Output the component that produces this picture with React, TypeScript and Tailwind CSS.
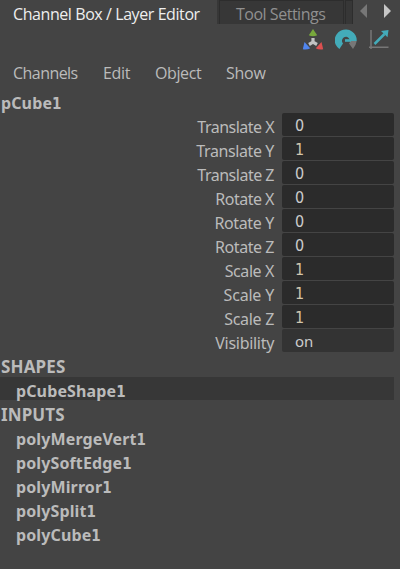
const channels = [
  { name: 'Translate X', value: '0', spacing: 'tracking-[-0.52px]' },
  { name: 'Translate Y', value: '1', spacing: 'tracking-[-0.4px]' },
  { name: 'Translate Z', value: '0', spacing: 'tracking-[-0.5px]' },
  { name: 'Rotate X', value: '0', spacing: 'tracking-[-0.5px]' },
  { name: 'Rotate Y', value: '0', spacing: 'tracking-[-0.35px]' },
  { name: 'Rotate Z', value: '0', spacing: 'tracking-[-0.45px]' },
  { name: 'Scale X', value: '1', spacing: 'tracking-[-0.4px]' },
  { name: 'Scale Y', value: '1', spacing: 'tracking-[-0.2px]' },
  { name: 'Scale Z', value: '1', spacing: 'tracking-[-0.3px]' },
  { name: 'Visibility', value: 'on', spacing: 'tracking-[-0.3px]' },
];

const inputs = ['polyMergeVert', 'polySoftEdge', 'polyMirror', 'polySplit', 'polyCube'];

function NodeName({ base }: { base: string }) {
  return (
    <span className="tracking-[0.12px] whitespace-nowrap">
      {base}
      <span className="font-['DejaVu_Sans_Condensed','DejaVu_Sans',sans-serif] text-[15px]">1</span>
    </span>
  );
}

function valueStyle(value: string) {
  if (value === 'on') return "bg-[#333333] font-['Noto_Sans',sans-serif] text-[15px] leading-6 text-[#cccccc]";
  if (value === '1') return "bg-[#2b2b2b] font-['DejaVu_Sans_Condensed','DejaVu_Sans',sans-serif] text-[16px] leading-[26px] text-[#d2c6ac]";
  return "bg-[#2b2b2b] font-['DejaVu_Sans_Condensed','DejaVu_Sans',sans-serif] text-[16px] leading-[26px] text-[#cccccc]";
}

function ManipulatorIcon() {
  return (
    <svg width="22" height="22" viewBox="0 0 22 22">
      <path d="M11 9v5M11 13.200l-4 2.300M11 13.200l4 2.300" stroke="#c2c2c2" strokeWidth="3.200" fill="none" />
      <path d="M11 0L15.200 6.300Q11 8.200 6.800 6.300Z" fill="#78a83c" />
      <path d="M2.500 13L8.200 19.200Q5.500 21 0.800 20.300Z" fill="#5085ee" />
      <path d="M19.500 13L13.800 19.200Q16.500 21 21.200 20.300Z" fill="#dc5050" />
    </svg>
  );
}

function SpeedIcon() {
  return (
    <svg width="22" height="22" viewBox="0 0 22 22">
      <path d="M8 14.500L4.400 20A11 10.700 0 1 1 21.700 12H15A4 4 0 1 0 8 14.500Z" fill="#43abb9" />
      <path d="M15 12H21.700Q21 16.500 18 20L14 14.500Q15 13.500 15 12Z" fill="#777" />
      <path d="M10 11.500H16" stroke="#43abb9" strokeWidth="2.600" />
    </svg>
  );
}

function GraphIcon() {
  return (
    <svg width="20" height="22" viewBox="0 0 20 22">
      <path d="M2 1V20M0 18.200H19.500" stroke="#777" strokeWidth="1.500" fill="none" />
      <path d="M5.500 15L15.500 5" stroke="#43abb9" strokeWidth="2.500" />
      <path d="M12 2L19.500 1L18.500 8.300Z" fill="#43abb9" />
    </svg>
  );
}

export default function App() {
  return (
    <div className="h-[569px] w-[400px] overflow-hidden bg-[#444444] font-['Noto_Sans',sans-serif] text-[#bbbbbb]">
      <header className="flex h-6 font-['Open_Sans','Noto_Sans',sans-serif] text-[16px] leading-6">
        <div className="w-[217px] pt-[2px] pl-[13px] tracking-[-0.42px] whitespace-nowrap text-[#eeeeee]">Channel Box / Layer Editor</div>
        <div className="flex h-6 w-[136px] bg-[#373737]">
          <div className="ml-[2px] h-6 w-[125px] border-t border-r border-l border-[#2d2d2d] pt-px pl-4 tracking-[-0.48px] whitespace-nowrap text-[#909090]">Tool Settings</div>
          <div className="ml-px h-6 w-2 border-t border-r border-l border-[#2d2d2d]" />
        </div>
        <svg className="mt-1 ml-[7px]" width="31" height="14" viewBox="0 0 31 14">
          <path d="M7 0V14L0 7Z" fill="#777" />
          <path d="M24 0V14L31 7Z" fill="#c6c6c6" />
        </svg>
      </header>
      <div className="flex h-8 pt-[5px] pl-[302px]">
        <ManipulatorIcon />
        <div className="ml-[11px]"><SpeedIcon /></div>
        <div className="ml-3"><GraphIcon /></div>
      </div>
      <nav className="flex h-[35px] pt-[5px] pl-[13px] font-['Open_Sans','Noto_Sans',sans-serif] text-[16px] leading-6">
        <span className="w-[90px] tracking-[-0.55px]">Channels</span>
        <span className="w-[52px] tracking-[-0.3px]">Edit</span>
        <span className="w-[71px] tracking-[-0.4px]">Object</span>
        <span className="tracking-[-0.25px]">Show</span>
      </nav>
      <div className="h-[22px] pl-px text-[16px] leading-6 font-bold"><NodeName base="pCube" /></div>
      <div className="flex flex-col gap-px">
        {channels.map(({ name, value, spacing }) => (
          <div key={name} className="flex h-[23px]">
            <div className={'w-[274px] pt-[2px] text-right text-[16px] leading-6 whitespace-nowrap ' + spacing}>{name}</div>
            <div className={'ml-2 h-[23px] w-28 rounded-[2px] pl-[13px] ' + valueStyle(value)}>{value}</div>
          </div>
        ))}
      </div>
      <div className="mt-[3px] text-[16px] leading-6 font-bold">
        <div className="h-[25px] pl-px text-[17px] tracking-[0.15px]">SHAPES</div>
        <div className="-mt-[3px] h-[23px] w-[394px] bg-[#373737] pt-[2px] pl-4"><NodeName base="pCubeShape" /></div>
        <div className="h-6 pt-[3px] pl-px text-[17px] tracking-[0.1px]">INPUTS</div>
        {inputs.map((base) => <div key={base} className="h-6 pt-[3px] pl-4"><NodeName base={base} /></div>)}
      </div>
    </div>
  );
}
